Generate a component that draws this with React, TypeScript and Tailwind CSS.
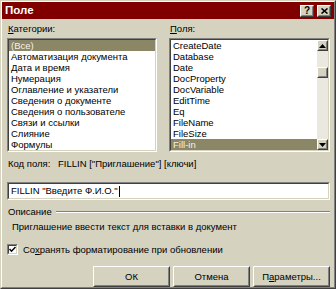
import type { ReactNode } from 'react';

const categories = [
  '(Все)',
  'Автоматизация документа',
  'Дата и время',
  'Нумерация',
  'Оглавление и указатели',
  'Сведения о документе',
  'Сведения о пользователе',
  'Связи и ссылки',
  'Слияние',
  'Формулы',
];

const fields = [
  'CreateDate',
  'Database',
  'Date',
  'DocProperty',
  'DocVariable',
  'EditTime',
  'Eq',
  'FileName',
  'FileSize',
  'Fill-in',
];

function Sunken({ className, children }: { className?: string; children: ReactNode }) {
  return (
    <div className={`border border-t-[#808080] border-l-[#808080] border-b-white border-r-white ${className ?? ''}`}>
      <div className="h-full border border-t-[#404040] border-l-[#404040] border-b-[#d5d2c0] border-r-[#d5d2c0] bg-white">
        {children}
      </div>
    </div>
  );
}

function Raised({ className, children }: { className?: string; children: ReactNode }) {
  return (
    <div className={`border border-t-white border-l-white border-b-[#404040] border-r-[#404040] ${className ?? ''}`}>
      <div className="h-full border border-t-[#d5d2c0] border-l-[#d5d2c0] border-b-[#808080] border-r-[#808080] bg-[#d5d2c0] flex items-center justify-center">
        {children}
      </div>
    </div>
  );
}

function ListRow({ text, selected }: { text: string; selected?: boolean }) {
  return (
    <div className={`h-[11px] leading-[11px] pl-[2px] whitespace-nowrap ${selected ? 'bg-[#8b8666] text-[#f4f2e8]' : ''}`}>
      {text}
    </div>
  );
}

function Arrow({ up }: { up?: boolean }) {
  return (
    <svg width="7" height="4" viewBox="0 0 7 4">
      <polygon points={up ? '3.5,0 7,4 0,4' : '0,0 7,0 3.5,4'} fill="#000" />
    </svg>
  );
}

export default function App() {
  return (
    <div className="w-[336px] h-[289px] bg-[#d5d2c0] text-black text-[9.5px] leading-[13px] font-['Liberation_Sans',Arial,sans-serif] border border-t-[#d5d2c0] border-l-[#d5d2c0] border-b-[#404040] border-r-[#404040]">
      <div className="h-full border border-t-white border-l-white border-b-[#808080] border-r-[#808080] flex flex-col">
        {/* title bar */}
        <div className="h-[18px] bg-[#800000] flex items-center pl-[3px] pr-[3px]">
          <span className="text-white font-bold text-[11.5px]">Поле</span>
          <div className="ml-auto flex gap-[3px]">
            <Raised className="w-[14px] h-[12px]">
              <span className="font-bold text-[10px] leading-none">?</span>
            </Raised>
            <Raised className="w-[14px] h-[12px]">
              <svg width="7" height="6" viewBox="0 0 7 6">
                <path d="M0.5 0.5 L6.5 5.5 M6.5 0.5 L0.5 5.5" stroke="#000" strokeWidth="1.6" />
              </svg>
            </Raised>
          </div>
        </div>

        <div className="flex flex-col pl-[5px] pr-[4px]">
          {/* lists */}
          <div className="flex gap-[12px] mt-[3px]">
            <div className="w-[150px] flex flex-col">
              <div className="h-[13px] mb-[3px] pl-px">
                <span className="underline">К</span>атегории:
              </div>
              <Sunken className="h-[114px]">
                {categories.map((c, i) => (
                  <ListRow key={c} text={c} selected={i === 0} />
                ))}
              </Sunken>
            </div>
            <div className="w-[161px] flex flex-col">
              <div className="h-[13px] mb-[3px] pl-px">
                <span className="underline">П</span>оля:
              </div>
              <Sunken className="h-[114px]">
                <div className="flex h-full">
                  <div className="flex-1">
                    {fields.map((f, i) => (
                      <ListRow key={f} text={f} selected={i === fields.length - 1} />
                    ))}
                  </div>
                  <div className="w-[11px] flex flex-col bg-[#ebe9df]">
                    <Raised className="h-[11px]">
                      <Arrow up />
                    </Raised>
                    <div className="h-[16px]" />
                    <Raised className="h-[11px]">
                      <span />
                    </Raised>
                    <div className="flex-1" />
                    <Raised className="h-[11px]">
                      <Arrow />
                    </Raised>
                  </div>
                </div>
              </Sunken>
            </div>
          </div>

          {/* field code */}
          <div className="flex mt-[5px] h-[13px] pl-px">
            <span className="w-[50px]">
              Ко<span className="underline">д</span> поля:
            </span>
            <span>FILLIN ["Приглашение"] [ключи]</span>
          </div>

          <Sunken className="h-[18px] mt-[12px]">
            <div className="pl-[2px] leading-[14px] whitespace-nowrap">
              FILLIN "Введите Ф.И.О."<span className="inline-block w-px h-[11px] bg-black align-middle ml-px" />
            </div>
          </Sunken>

          {/* description */}
          <div className="flex items-center mt-[5px] h-[13px] pl-px">
            <span>Описание</span>
            <div className="flex-1 ml-[4px] flex flex-col">
              <div className="h-px bg-[#808080]" />
              <div className="h-px bg-white" />
            </div>
          </div>
          <div className="mt-[2px] h-[13px] pl-[5px]">Приглашение ввести текст для вставки в документ</div>

          {/* checkbox */}
          <div className="flex items-center mt-[10px] h-[13px]">
            <Sunken className="w-[11px] h-[11px]">
              <svg width="7" height="7" viewBox="0 0 7 7" className="block">
                <path d="M0.5 3 L2.5 5.2 L6.5 1" stroke="#000" strokeWidth="1.5" fill="none" />
              </svg>
            </Sunken>
            <span className="ml-[5px]">
              Со<span className="underline">х</span>ранять форматирование при обновлении
            </span>
          </div>

          {/* buttons */}
          <div className="flex justify-end gap-[3px] mt-[10px]">
            <Raised className="w-[77px] h-[21px]">
              <span>ОК</span>
            </Raised>
            <Raised className="w-[77px] h-[21px]">
              <span>Отмена</span>
            </Raised>
            <Raised className="w-[77px] h-[21px]">
              <span>
                П<span className="underline">а</span>раметры...
              </span>
            </Raised>
          </div>
        </div>
      </div>
    </div>
  );
}
